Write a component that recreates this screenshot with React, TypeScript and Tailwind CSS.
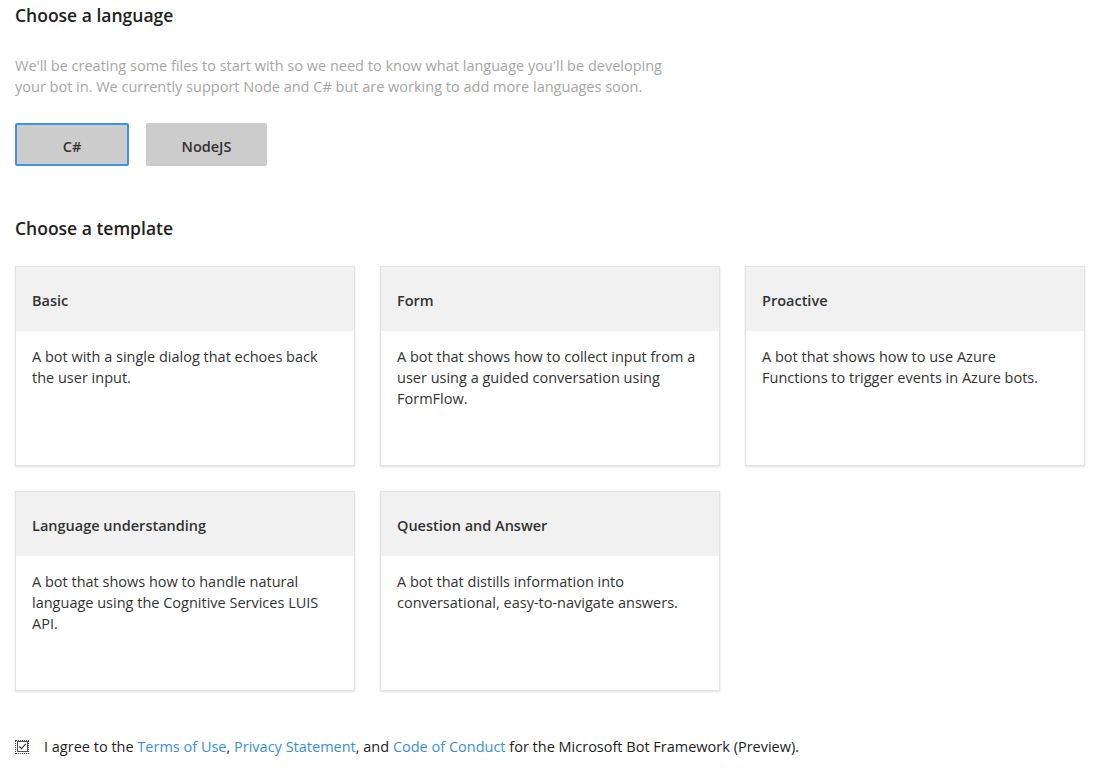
import React, { useState } from 'react';

const TEMPLATES = [
  { title: 'Basic', desc: 'A bot with a single dialog that echoes back the user input.' },
  { title: 'Form', desc: 'A bot that shows how to collect input from a user using a guided conversation using FormFlow.' },
  { title: 'Proactive', desc: 'A bot that shows how to use Azure Functions to trigger events in Azure bots.' },
  { title: 'Language understanding', desc: 'A bot that shows how to handle natural language using the Cognitive Services LUIS API.' },
  { title: 'Question and Answer', desc: 'A bot that distills information into conversational, easy-to-navigate answers.' },
];

export default function App() {
  const [lang, setLang] = useState('csharp');
  const [agreed, setAgreed] = useState(true);

  return (
    <div className="min-h-screen bg-white pl-[15px] pt-[3px] text-[#333] font-['Open_Sans','Noto_Sans',sans-serif]">
      {/* language */}
      <h2 className="text-[17.5px] leading-[24px] font-semibold text-[#222]">Choose a language</h2>
      <p className="mt-[28px] max-w-[660px] text-[14.5px] leading-[21px] text-[#a6a6a6]">
        We'll be creating some files to start with so we need to know what language you'll be developing your bot in. We currently support Node and C# but are working to add more languages soon.
      </p>
      <div className="mt-[26px] flex gap-[17px]">
        <button
          onClick={() => setLang('csharp')}
          className={`h-[43px] w-[114px] rounded-[2px] bg-[#cccccc] pt-[4px] text-[14.5px] font-semibold text-[#333] ${
            lang === 'csharp' ? 'border-2 border-[#3c94e3]' : 'border-2 border-transparent'
          }`}
        >
          C#
        </button>
        <button
          onClick={() => setLang('node')}
          className={`h-[43px] w-[121px] rounded-[2px] bg-[#cccccc] pt-[4px] text-[14.5px] font-semibold text-[#333] ${
            lang === 'node' ? 'border-2 border-[#3c94e3]' : 'border-2 border-transparent'
          }`}
        >
          NodeJS
        </button>
      </div>

      {/* templates */}
      <h2 className="mt-[50px] text-[17.5px] leading-[24px] font-semibold text-[#222]">Choose a template</h2>
      <div className="mt-[26px] grid grid-cols-[340px_340px_340px] gap-x-[25px] gap-y-[25px]">
        {TEMPLATES.map((t) => (
          <div
            key={t.title}
            className="flex h-[200px] flex-col border border-[#e3e3e3] bg-white shadow-[0_1px_2px_rgba(0,0,0,0.12)]"
          >
            <div className="flex h-[64px] items-center bg-[#f1f1f1] px-[16px] pt-[3px] text-[14.5px] font-semibold text-[#333]">
              {t.title}
            </div>
            <p className="pl-[16px] pr-[22px] pt-[15px] text-[14.5px] leading-[21px] text-[#333]">{t.desc}</p>
          </div>
        ))}
      </div>

      {/* agreement */}
      <label className="mt-[45px] flex items-center gap-[15px] text-[14.5px] text-[#222]">
        <span
          onClick={() => setAgreed(!agreed)}
          className="flex h-[14px] w-[14px] items-center justify-center border border-dotted border-[#444]"
        >
          <span className="flex h-[11px] w-[11px] items-center justify-center border border-[#555] bg-white">
            {agreed && (
              <svg viewBox="0 0 10 10" className="h-[9px] w-[9px]">
                <path d="M1.5 5 L4 7.5 L8.5 2" fill="none" stroke="#333" strokeWidth="1.3" />
              </svg>
            )}
          </span>
        </span>
        <span>
          I agree to the <a className="text-[#3a8fdc]">Terms of Use</a>,{' '}
          <a className="text-[#3a8fdc]">Privacy Statement</a>, and{' '}
          <a className="text-[#3a8fdc]">Code of Conduct</a> for the Microsoft Bot Framework (Preview).
        </span>
      </label>
    </div>
  );
}
